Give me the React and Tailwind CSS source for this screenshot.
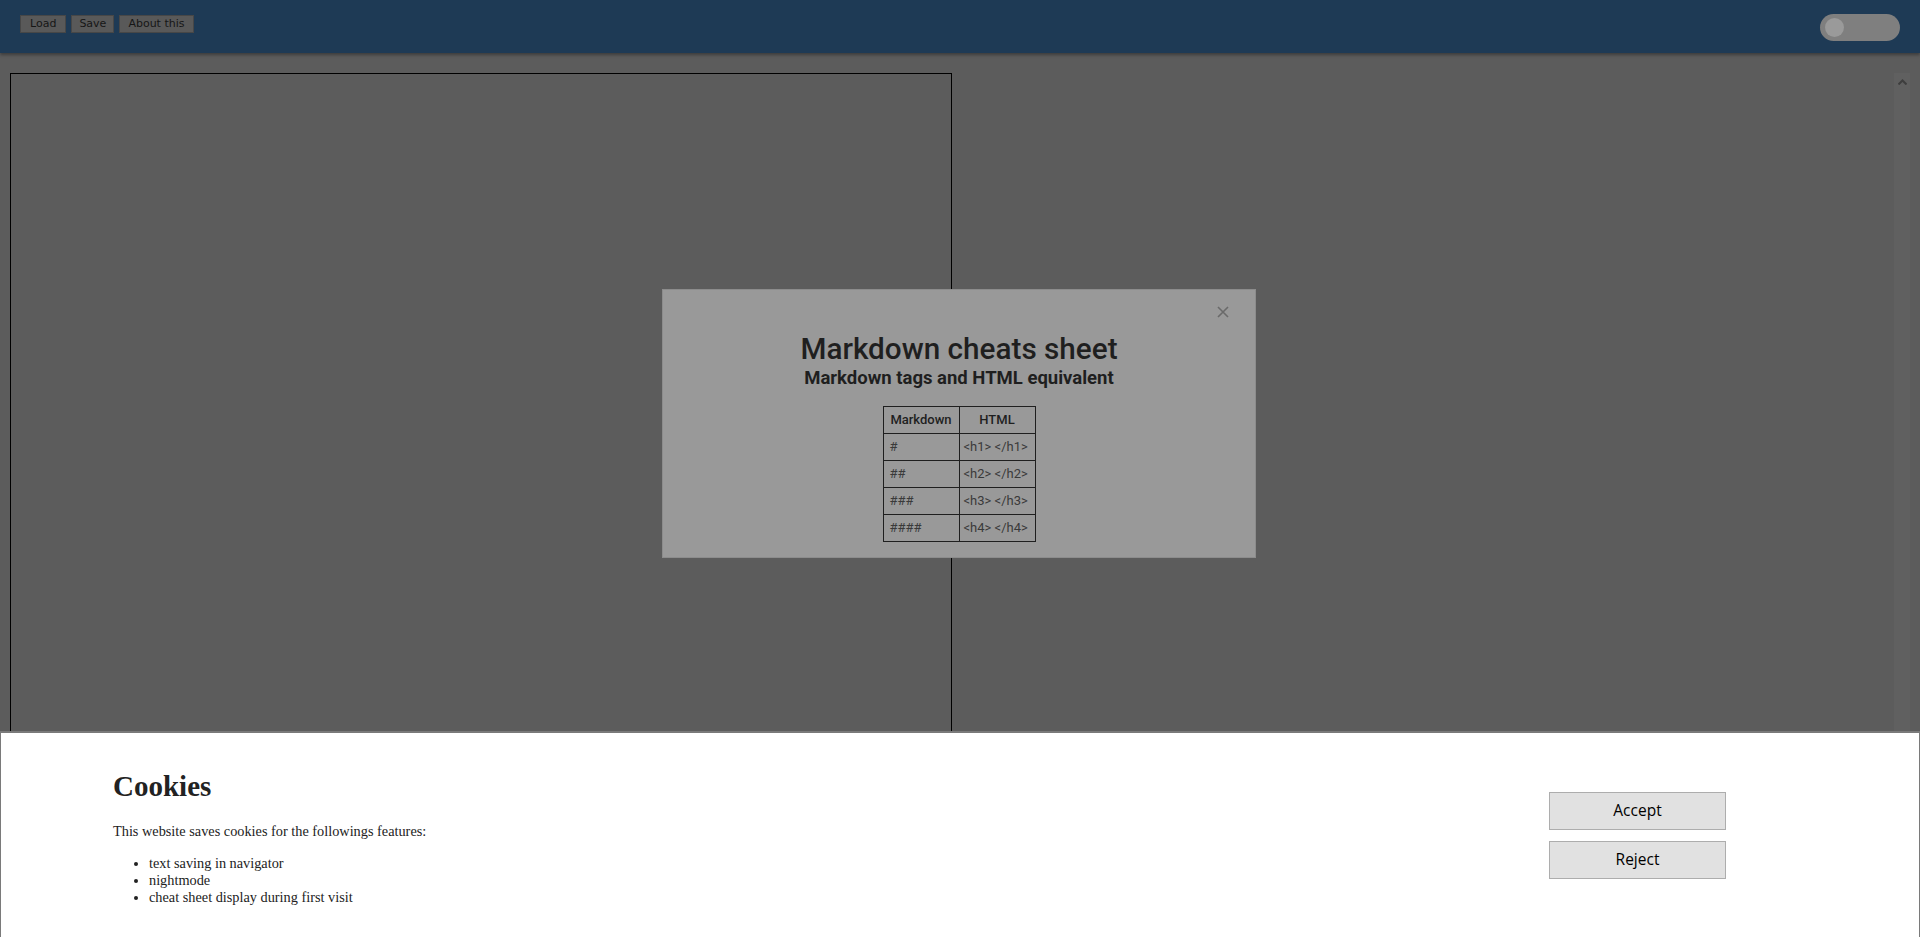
import { useState } from "react";

const rows = [
  ["#", "<h1> </h1>"],
  ["##", "<h2> </h2>"],
  ["###", "<h3> </h3>"],
  ["####", "<h4> </h4>"],
];

export default function App() {
  const [night, setNight] = useState(false);
  const [text, setText] = useState("");

  return (
    <div className="relative h-[937px] w-[1920px] overflow-hidden bg-[#5c5c5c]">
      {/* Top bar */}
      <header className="relative z-10 flex h-[53px] items-start justify-between bg-[#1e3a55] pl-[20px] pr-[20px] shadow-[0_2px_3px_rgba(0,0,0,0.35)]">
        <div className="mt-[15px] flex gap-[5px] font-['DejaVu_Sans',sans-serif] text-[11px] text-[#161616]">
          <button className="h-[18px] border border-[#474747] bg-[#595959] px-[9px] leading-[16px]">Load</button>
          <button className="h-[18px] border border-[#474747] bg-[#595959] px-[7px] leading-[16px]">Save</button>
          <button className="h-[18px] border border-[#474747] bg-[#595959] px-[8px] leading-[16px]">About this</button>
        </div>
        <button
          onClick={() => setNight(!night)}
          className="mt-[14px] flex h-[27px] w-[80px] items-center rounded-full bg-[#7f7f7f] px-[5px]"
        >
          <span className="h-[19px] w-[19px] rounded-full bg-[#9a9a9a]" />
        </button>
      </header>

      {/* Editor + preview */}
      <main className="flex pt-[20px]">
        <textarea
          value={text}
          onChange={(e) => setText(e.target.value)}
          className="ml-[10px] h-[864px] w-[942px] resize-none border border-black bg-transparent outline-none"
        />
        <div className="mr-[10px] flex flex-1 justify-end">
          <div className="flex h-[864px] w-[16px] justify-center bg-[#606060] pt-[6px]">
            <svg width="9" height="6" viewBox="0 0 9 6">
              <path d="M0.5 5.5 L4.5 1.5 L8.5 5.5" fill="none" stroke="#3e3e3e" strokeWidth="2" />
            </svg>
          </div>
        </div>
      </main>

      {/* Cheat sheet modal */}
      <div className="absolute left-[662px] top-[289px] flex h-[269px] w-[594px] flex-col items-center border border-[#8c8c8c] bg-[#999999] pt-[41px] font-['Roboto',sans-serif] text-[#1f1f1f]">
        <button className="absolute right-[26px] top-[16px] text-[#6a6a6a]">
          <svg width="12" height="12" viewBox="0 0 12 12">
            <path d="M1 1 L11 11 M11 1 L1 11" stroke="currentColor" strokeWidth="1.6" />
          </svg>
        </button>
        <h1 className="text-[29.7px] font-medium leading-[36px]">Markdown cheats sheet</h1>
        <h3 className="text-[18.5px] font-bold leading-[22px]">Markdown tags and HTML equivalent</h3>
        <table className="mt-[17px] w-[152px] table-fixed border-collapse whitespace-nowrap text-[13px]">
          <thead>
            <tr className="h-[27px]">
              <th className="w-[76px] border border-[#1f1f1f] px-[4px] font-medium">Markdown</th>
              <th className="w-[76px] border border-[#1f1f1f] px-[4px] font-medium">HTML</th>
            </tr>
          </thead>
          <tbody className="text-[#3a3a3a]">
            {rows.map(([md, html]) => (
              <tr key={md} className="h-[27px]">
                <td className="border border-[#1f1f1f] px-[6px]">{md}</td>
                <td className="border border-[#1f1f1f] px-[4px]">{html}</td>
              </tr>
            ))}
          </tbody>
        </table>
      </div>

      {/* Cookie banner */}
      <div className="absolute bottom-0 left-0 flex h-[206px] w-full justify-between border-x border-t-2 border-[#7a7a7a] bg-white">
        <div className="pl-[112px] pt-[37px] font-['Liberation_Serif',serif] text-[#222]">
          <h2 className="text-[29px] font-bold leading-[33px]">Cookies</h2>
          <p className="mt-[20px] text-[14.3px] leading-[17px]">This website saves cookies for the followings features:</p>
          <ul className="mt-[15px] list-disc pl-[36px] text-[14.3px] leading-[17px]">
            <li>text saving in navigator</li>
            <li>nightmode</li>
            <li>cheat sheet display during first visit</li>
          </ul>
        </div>
        <div className="flex flex-col gap-[11px] pr-[193px] pt-[59px] font-['Open_Sans',sans-serif] text-[15.5px] text-black">
          <button className="h-[38px] w-[177px] border border-[#adadad] bg-[#e1e1e1]">Accept</button>
          <button className="h-[38px] w-[177px] border border-[#adadad] bg-[#e1e1e1]">Reject</button>
        </div>
      </div>
    </div>
  );
}
